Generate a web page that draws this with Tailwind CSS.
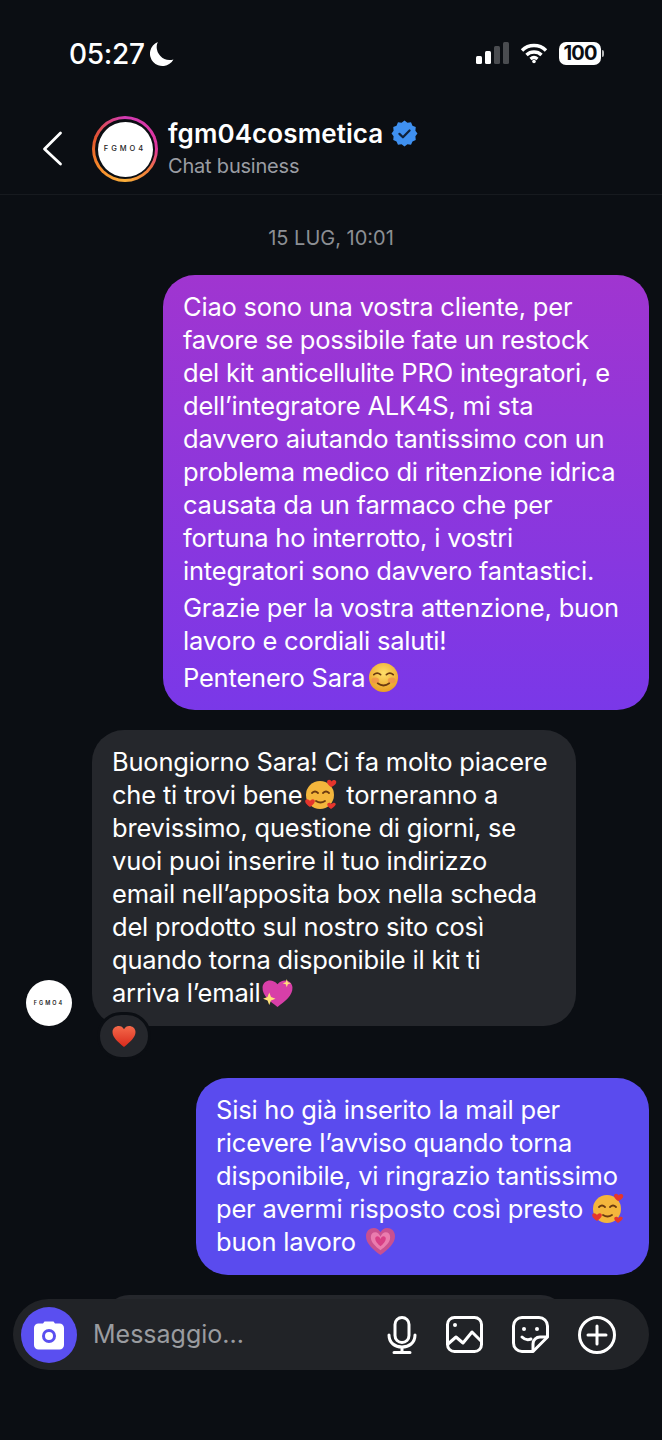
<!DOCTYPE html>
<html lang="it"><head><meta charset="utf-8"><script src="https://cdn.jsdelivr.net/npm/@tailwindcss/browser@4"></script></head>
<body class="bg-[#0b0e13]">
<div class="w-[662px] h-[1440px] overflow-hidden bg-[#0b0e13] text-white font-['Inter','Liberation_Sans',sans-serif] flex flex-col">
  <!-- status -->
  <div class="h-[108px] shrink-0 flex justify-between pl-[69px] pr-[58px] pt-[35px]">
    <div class="flex items-start gap-[3px]">
      <span class="text-[28px] leading-[38px] font-medium tracking-[-0.3px]">05:27</span>
      <svg class="mt-[6px]" width="26" height="26" viewBox="0 0 24 24"><path d="M9 1 A11.500 11.500 0 1 0 23.500 17 A12 12 0 0 1 9 1Z" fill="#fff"/></svg>
    </div>
    <div class="flex items-start gap-[11px] pt-[7px]">
      <svg width="33" height="22" viewBox="0 0 33 22"><rect x="0" y="14" width="6" height="8" rx="1.500" fill="#fff"/><rect x="9" y="9" width="6" height="13" rx="1.500" fill="#fff"/><rect x="18" y="4" width="6" height="18" rx="1.500" fill="#4a4c50"/><rect x="27" y="0" width="6" height="22" rx="1.500" fill="#4a4c50"/></svg>
      <svg width="28" height="22" viewBox="0 0 28 22" fill="none" stroke="#fff" stroke-width="3.400"><path d="M2 8.500a17 17 0 0 1 24 0M6.500 13a11 11 0 0 1 15 0M10.500 17a5.500 5.500 0 0 1 7 0"/><circle cx="14" cy="19.500" r="1.800" fill="#fff" stroke="none"/></svg>
      <div class="flex items-center">
        <div class="w-[42px] h-[23px] bg-white rounded-[7px] text-[#0b0e13] text-[20px] leading-[23px] font-bold text-center tracking-[-0.8px]">100</div>
        <div class="w-[2px] h-[7px] bg-white/70 rounded-r ml-[1px]"></div>
      </div>
    </div>
  </div>
  <!-- header -->
  <div class="h-[86px] shrink-0 flex items-start pl-[42px] border-b border-white/5 box-content">
    <svg class="mt-[23px]" width="22" height="36" viewBox="0 0 22 36" fill="none" stroke="#fff" stroke-width="2.800" stroke-linecap="round" stroke-linejoin="round"><path d="M18.500 2 L2.500 18 L18.500 33"/></svg>
    <div class="ml-[28px] mt-[8px] w-[66px] h-[66px] rounded-full bg-[conic-gradient(from_0deg,#d23ab4,#e0359c_90deg,#f07a3a_130deg,#fbb03b_180deg,#f58529_240deg,#e2552e_290deg,#d23ab4)] flex items-center justify-center">
      <div class="w-[60px] h-[60px] rounded-full bg-[#0b0e13] flex items-center justify-center">
        <div class="w-[55px] h-[55px] rounded-full bg-white flex items-center justify-center text-[7.500px] tracking-[3px] text-[#222] font-medium">FGMO4</div>
      </div>
    </div>
    <div class="ml-[10px] mt-[9px]">
      <div class="flex items-center gap-[8px]">
        <span class="text-[26px] leading-[33px] font-semibold tracking-[0.1px]">fgm04cosmetica</span>
        <svg width="27" height="27" viewBox="0 0 24 24"><path d="M12 .5l2.600 1.900 3.200-.3 1.300 2.900 2.900 1.300-.3 3.200L23.500 12l-1.800 2.500.3 3.200-2.900 1.300-1.300 2.900-3.200-.3L12 23.500l-2.600-1.900-3.200.3-1.300-2.900-2.900-1.300.3-3.200L.5 12l1.800-2.500-.3-3.200 2.900-1.300 1.300-2.900 3.200.3z" fill="#3f90f0"/><path d="M7.500 12.300l3.100 3 5.900-6" fill="none" stroke="#10213a" stroke-width="2" stroke-linecap="round" stroke-linejoin="round"/></svg>
      </div>
      <div class="text-[20px] leading-[28px] text-[#9a9da3] mt-[2px] tracking-[-0.2px]">Chat business</div>
    </div>
  </div>
  <!-- date -->
  <div class="text-center text-[#8c8f94] text-[20px] leading-[26px] mt-[30px]">15 LUG, 10:01</div>
  <!-- bubble 1 -->
  <div class="mt-[24px] ml-[163px] w-[486px] h-[435px] rounded-[32px] bg-[linear-gradient(180deg,#a035d0,#7a38e8)] px-[20px] pt-[15px] text-[25.500px] leading-[33px] tracking-[-0.2px] whitespace-nowrap">
    <div>Ciao sono una vostra cliente, per</div>
    <div>favore se possibile fate un restock</div>
    <div>del kit anticellulite PRO integratori, e</div>
    <div>dell’integratore ALK4S, mi sta</div>
    <div>davvero aiutando tantissimo con un</div>
    <div>problema medico di ritenzione idrica</div>
    <div>causata da un farmaco che per</div>
    <div>fortuna ho interrotto, i vostri</div>
    <div>integratori sono davvero fantastici.</div>
    <div class="mt-[4px]">Grazie per la vostra attenzione, buon</div>
    <div>lavoro e cordiali saluti!</div>
    <div class="mt-[4px] flex items-center">Pentenero Sara
      <svg class="ml-[3px]" width="31" height="31" viewBox="0 0 32 32"><defs><radialGradient id="y1" cx="50%" cy="35%" r="70%"><stop offset="0" stop-color="#ffdf6a"/><stop offset="1" stop-color="#e89a1e"/></radialGradient></defs><circle cx="16" cy="16" r="15" fill="url(#y1)"/><ellipse cx="7.500" cy="19" rx="4" ry="3" fill="#ef8a4a" opacity=".7"/><ellipse cx="24.500" cy="19" rx="4" ry="3" fill="#ef8a4a" opacity=".7"/><path d="M6 13q3.500-3 7 0M19 13q3.500-3 7 0M10 22q6 4.500 12 0" fill="none" stroke="#6b3a10" stroke-width="1.800" stroke-linecap="round"/></svg>
    </div>
  </div>
  <!-- bubble 2 -->
  <div class="mt-[20px] flex items-end pl-[26px] relative">
    <div class="w-[46px] h-[46px] rounded-full bg-white flex items-center justify-center text-[5.500px] tracking-[2px] text-[#222] font-semibold">FGMO4</div>
    <div class="ml-[20px] w-[484px] h-[296px] rounded-[32px] bg-[#25272c] pl-[20px] pt-[15px] text-[25.500px] leading-[33px] tracking-[-0.2px] whitespace-nowrap">
      <div>Buongiorno Sara! Ci fa molto piacere</div>
      <div class="flex items-center">che ti trovi bene
        <svg class="mx-[1px]" width="35" height="33" viewBox="0 0 35 33"><use href="#love"/></svg>&nbsp;torneranno a</div>
      <div>brevissimo, questione di giorni, se</div>
      <div>vuoi puoi inserire il tuo indirizzo</div>
      <div>email nell’apposita box nella scheda</div>
      <div>del prodotto sul nostro sito così</div>
      <div>quando torna disponibile il kit ti</div>
      <div class="flex items-center">arriva l’email
        <svg width="33" height="31" viewBox="0 0 32 30"><path d="M16 29C9 24 1 18 1.500 10 2 3 11 1 16 7 21 1 30 3 30.500 10 31 18 23 24 16 29Z" fill="#d83fa8"/><path d="M8 15l1.700 4.300L14 21l-4.300 1.700L8 27l-1.700-4.300L2 21l4.300-1.700zM25 2l1 3 3 1-3 1-1 3-1-3-3-1 3-1z" fill="#ffe27a"/></svg>
      </div>
    </div>
    <div class="absolute left-[100px] top-[282px] w-[48px] h-[42px] rounded-full bg-[#25272c] border-[3px] border-[#0b0e13] box-content -ml-[3px] flex items-center justify-center">
      <svg width="24" height="23" viewBox="0 0 24 22"><defs><linearGradient id="h1" x1="0" y1="0" x2="0" y2="1"><stop offset="0" stop-color="#f4694a"/><stop offset="1" stop-color="#d92a1c"/></linearGradient></defs><path d="M12 21.500C6 16.500.5 12 .5 6.500.5 2.500 4 .5 6.800.5 9 .5 11 1.700 12 3.800 13 1.700 15 .5 17.200.5 20 .5 23.500 2.500 23.500 6.500 23.500 12 18 16.500 12 21.500Z" fill="url(#h1)"/></svg>
    </div>
  </div>
  <!-- bubble 3 -->
  <div class="mt-[52px] ml-[196px] w-[453px] h-[197px] rounded-[32px] bg-[#5a4bee] pl-[20px] pt-[15px] text-[25.500px] leading-[33px] tracking-[-0.2px] whitespace-nowrap">
    <div>Sisi ho già inserito la mail per</div>
    <div>ricevere l’avviso quando torna</div>
    <div>disponibile, vi ringrazio tantissimo</div>
    <div class="flex items-center">per avermi risposto così presto&nbsp;
      <svg width="35" height="33" viewBox="0 0 35 33"><g id="love"><circle cx="17" cy="17" r="14" fill="#f4b63c"/><path d="M9 15q3-3 6 0M20 15q3-3 6 0M13 23q4.500 3 9 0" fill="none" stroke="#6b3a10" stroke-width="1.800" stroke-linecap="round"/><path d="M28 9C24 6 23.500 4 24.500 2.500 26 1 28 2 28.500 3.500 29.500 2 32 1.500 33 3 34 5 32 7.500 28 9ZM7 29C3 26 1.500 24 2.500 22 4 20.500 6 21.500 7 23 8 21.500 10 20.500 11.500 22 12.500 24 11 26 7 29ZM28 31C25 29 23.500 27 24.500 25.500 26 24 28 25 28.500 26 29.500 25 31.500 24 32.500 25.500 33.500 27 31 29 28 31Z" fill="#e5352c"/></g></svg>
    </div>
    <div class="flex items-center">buon lavoro&nbsp;
      <svg class="ml-[2px]" width="31" height="29" viewBox="0 0 32 30"><path d="M16 29C8 23 1 17 1 9.500 1 4 5 1 9 1 12 1 15 3 16 5.500 17 3 20 1 23 1 27 1 31 4 31 9.500 31 17 24 23 16 29Z" fill="#c9508f"/><path d="M16 24C11 20 6 16 6 10.500 6 7.500 8 5.500 10.500 5.500 13 5.500 15 7.500 16 10 17 7.500 19 5.500 21.500 5.500 24 5.500 26 7.500 26 10.500 26 16 21 20 16 24Z" fill="#ea7cae"/><path d="M16 20C13 17.500 10.500 15 10.500 12 10.500 10.500 11.500 9.500 12.800 9.500 14.200 9.500 15.500 10.700 16 12.500 16.500 10.700 17.800 9.500 19.200 9.500 20.500 9.500 21.500 10.500 21.500 12 21.500 15 19 17.500 16 20Z" fill="#d93f86"/></svg>
    </div>
  </div>
  <!-- peeking bubble + composer -->
  <div class="mt-[20px] ml-[105px] w-[460px] h-[30px] shrink-0 rounded-t-[24px] bg-[#25272c]"></div>
  <div class="-mt-[26px] ml-[13px] w-[636px] h-[71px] shrink-0 rounded-[36px] bg-[#212327] flex items-center pl-[8px] relative">
    <div class="w-[56px] h-[56px] rounded-full bg-[#5a4ff0] flex items-center justify-center">
      <svg width="32" height="30" viewBox="0 0 32 30"><path d="M10 3.500 11.500 1.500h9L22 3.500h4.500A4.500 4.500 0 0 1 31 8v17a4.500 4.500 0 0 1-4.500 4.500h-21A4.500 4.500 0 0 1 1 25V8a4.500 4.500 0 0 1 4.500-4.500Z" fill="#fff"/><circle cx="16" cy="16" r="5.500" fill="none" stroke="#5a4ff0" stroke-width="3"/></svg>
    </div>
    <div class="ml-[16px] text-[25px] leading-[32px] text-[#9a9ca0] -mt-[2px]">Messaggio...</div>
    <div class="ml-auto flex items-center gap-[29px] pr-[33px]">
      <svg width="30" height="38" viewBox="0 0 30 38" fill="none" stroke="#fff" stroke-width="3" stroke-linecap="round"><rect x="8" y="1.500" width="14" height="25" rx="7"/><path d="M2 19c0 8 6 12 13 12s13-4 13-12M15 31v5M7 36.500h16"/></svg>
      <svg width="37" height="37" viewBox="0 0 37 37" fill="none" stroke="#fff" stroke-width="3" stroke-linejoin="round"><rect x="1.500" y="1.500" width="34" height="34" rx="7"/><circle cx="9" cy="9" r="2" fill="#fff" stroke="none"/><path d="M2 28l8-7 7 6 9-11 9 9"/></svg>
      <svg width="37" height="37" viewBox="0 0 37 37" fill="none" stroke="#fff" stroke-width="3" stroke-linejoin="round" stroke-linecap="round"><path d="M10 1.500h17a8.500 8.500 0 0 1 8.500 8.500v11L21 35.500H10A8.500 8.500 0 0 1 1.500 27V10A8.500 8.500 0 0 1 10 1.500Z"/><path d="M35 21h-7a7 7 0 0 0-7 7v7"/><circle cx="12" cy="13" r="2" fill="#fff" stroke="none"/><circle cx="25" cy="13" r="2" fill="#fff" stroke="none"/><path d="M10 21q4 4 9 2"/></svg>
      <svg width="38" height="38" viewBox="0 0 38 38" fill="none" stroke="#fff" stroke-width="3" stroke-linecap="round"><circle cx="19" cy="19" r="17.500"/><path d="M19 10v18M10 19h18"/></svg>
    </div>
  </div>
</div>
</body></html>
